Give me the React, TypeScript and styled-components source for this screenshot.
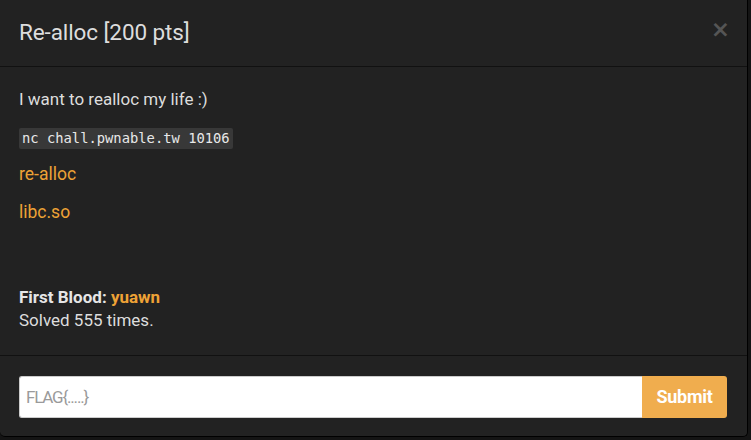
import { FC } from "react";
import styled, { createGlobalStyle } from "styled-components";

const COLORS = {
  page: "#141414",
  modal: "#222222",
  line: "#111111",
  text: "#dddddd",
  link: "#eea236",
  button: "#f0ad4e",
};

const GlobalStyle = createGlobalStyle`
  html, body {
    margin: 0;
    padding: 0;
    background: ${COLORS.page};
    font-family: Roboto, "Liberation Sans", sans-serif;
    overflow: hidden;
  }
`;

const Page = styled.div`
  width: 751px;
  height: 440px;
  overflow: hidden;
`;

const Modal = styled.div`
  width: 748px;
  height: 437px;
  background: ${COLORS.modal};
  border-right: 1px solid #000;
  border-bottom: 1px solid #000;
  border-radius: 0 0 5px 5px;
  box-sizing: border-box;
  display: flex;
  flex-direction: column;
`;

const Header = styled.div`
  height: 67px;
  box-sizing: border-box;
  border-bottom: 1px solid ${COLORS.line};
  display: flex;
  align-items: center;
  justify-content: space-between;
  padding: 0 17px 2px 19px;
  h4 {
    margin: 0;
    font-size: 22.5px;
    font-weight: 400;
    color: ${COLORS.text};
    letter-spacing: -0.1px;
  }
`;

const Close = styled.span`
  font-size: 23px;
  font-weight: 700;
  line-height: 1;
  color: #555555;
  margin-bottom: 6px;
  font-family: "DejaVu Sans", sans-serif;
`;

const Body = styled.div`
  height: 289px;
  box-sizing: border-box;
  border-bottom: 1px solid ${COLORS.line};
  padding: 21px 19px 0;
  color: ${COLORS.text};
  font-size: 17px;
  p {
    margin: 0;
    line-height: 22px;
  }
`;

const Code = styled.code`
  display: inline-block;
  margin-top: 18px;
  background: #383838;
  color: #e8e8e8;
  font-family: "DejaVu Sans Mono", monospace;
  font-size: 13.8px;
  line-height: 21px;
  padding: 0 3px;
  border-radius: 2px;
`;

const FileLink = styled.a`
  display: block;
  color: ${COLORS.link};
  text-decoration: none;
  font-size: 17.5px;
  line-height: 22px;
  margin-top: ${(p: { $gap: number }) => p.$gap}px;
`;

const Stats = styled.div`
  margin-top: 63px;
  line-height: 23px;
  b {
    color: #e6e6e6;
  }
  span {
    color: ${COLORS.link};
    font-weight: 700;
  }
`;

const Footer = styled.form`
  flex: 1;
  display: flex;
  align-items: center;
  padding: 1px 20px 0 19px;
  margin: 0;
`;

const FlagInput = styled.input`
  flex: 1;
  height: 42px;
  box-sizing: border-box;
  border: 1px solid #ccc;
  border-right: none;
  border-radius: 3px 0 0 3px;
  padding: 0 6px;
  font-size: 17px;
  letter-spacing: -1.2px;
  font-family: Roboto, sans-serif;
  color: #555;
  outline: none;
  &::placeholder {
    color: #9a9a9a;
  }
`;

const SubmitButton = styled.button`
  width: 85px;
  height: 42px;
  border: none;
  border-radius: 0 3px 3px 0;
  background: ${COLORS.button};
  color: #fff;
  font-weight: 700;
  font-size: 18px;
  font-family: Roboto, sans-serif;
  letter-spacing: -0.3px;
`;

const Behind = styled.div`
  display: flex;
  padding-left: 82px;
  gap: 232px;
  color: #555;
  font-size: 16px;
  line-height: 20px;
`;

const App: FC = () => (
  <Page>
    <GlobalStyle />
    <Modal>
      <Header>
        <h4>Re-alloc [200 pts]</h4>
        <Close>×</Close>
      </Header>
      <Body>
        <p>I want to realloc my life :)</p>
        <Code>nc chall.pwnable.tw 10106</Code>
        <FileLink href="#" $gap={14}>
          re-alloc
        </FileLink>
        <FileLink href="#" $gap={16}>
          libc.so
        </FileLink>
        <Stats>
          <b>First Blood: </b>
          <span>yuawn</span>
          <br />
          Solved 555 times.
        </Stats>
      </Body>
      <Footer onSubmit={(e) => e.preventDefault()}>
        <FlagInput placeholder="FLAG{.....}" />
        <SubmitButton type="submit">Submit</SubmitButton>
      </Footer>
    </Modal>
    <Behind>
      <span>300 pts</span>
      <span>300 pts</span>
      <span>350 pts</span>
    </Behind>
  </Page>
);

export default App;
